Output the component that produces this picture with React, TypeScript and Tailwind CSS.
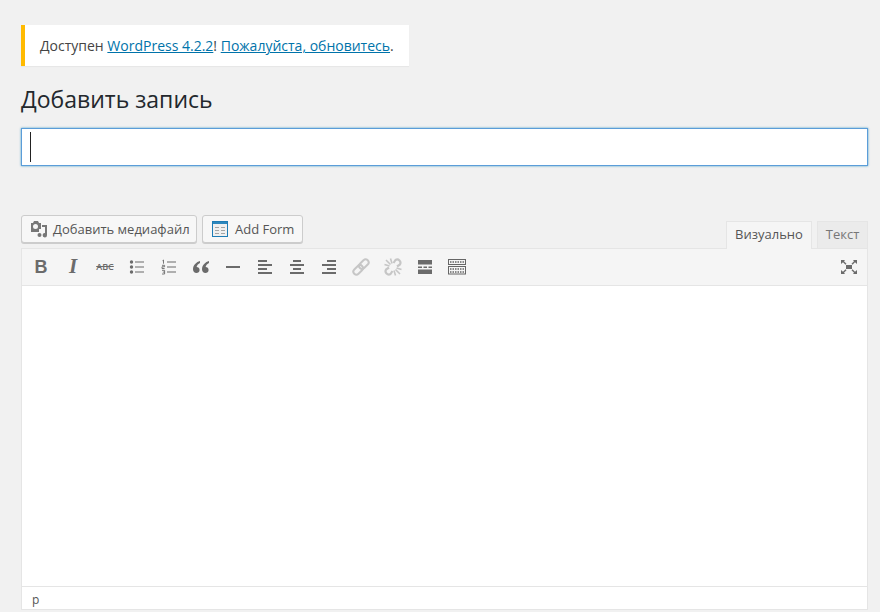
import React from "react";

const grey = "#6b6b6b";

function Bullets() {
  return (
    <svg width="20" height="20" viewBox="0 0 20 20" fill={grey}>
      <circle cx="4.500" cy="5" r="1.700" />
      <circle cx="4.500" cy="10" r="1.700" />
      <circle cx="4.500" cy="15" r="1.700" />
      <rect x="8" y="4.500" width="9" height="1" />
      <rect x="8" y="9.500" width="9" height="1" />
      <rect x="8" y="14.500" width="9" height="1" />
    </svg>
  );
}

function Numbers() {
  return (
    <svg width="20" height="20" viewBox="0 0 20 20" fill={grey}>
      <path
        d="M3.500 3.700 4.500 3v3.700M3 8.300h2.600v1.500H3v1.700h2.600M3 13.300h2.600v3.700H3M3.800 15.100h1.800"
        fill="none"
        stroke={grey}
        strokeWidth="0.900"
      />
      <rect x="8" y="4.500" width="9" height="1" />
      <rect x="8" y="9.500" width="9" height="1" />
      <rect x="8" y="14.500" width="9" height="1" />
    </svg>
  );
}

function Quote() {
  return (
    <svg width="20" height="20" viewBox="0 0 20 20" fill={grey}>
      <path d="M9 4C5.500 5 2 8 2 12.200c0 2.400 1.500 3.800 3.400 3.800 1.800 0 3.200-1.400 3.200-3.100s-1.300-3-3-3c.4-1.600 1.800-3 3.400-3.800z" />
      <path d="M18 4c-3.500 1-7 4-7 8.200 0 2.400 1.500 3.800 3.400 3.800 1.800 0 3.200-1.400 3.200-3.100s-1.300-3-3-3c.4-1.600 1.800-3 3.400-3.800z" />
    </svg>
  );
}

function AlignLeft() {
  return (
    <svg width="20" height="20" viewBox="0 0 20 20" fill={grey}>
      <path d="M12 5V3H3v2h9zm5 4V7H3v2h14zm-5 4v-2H3v2h9zm5 4v-2H3v2h14z" />
    </svg>
  );
}

function AlignCenter() {
  return (
    <svg width="20" height="20" viewBox="0 0 20 20" fill={grey}>
      <path d="M14 5V3H6v2h8zm3 4V7H3v2h14zm-3 4v-2H6v2h8zm3 4v-2H3v2h14z" />
    </svg>
  );
}

function AlignRight() {
  return (
    <svg width="20" height="20" viewBox="0 0 20 20" fill={grey}>
      <path d="M17 5V3H8v2h9zm0 4V7H3v2h14zm0 4v-2H8v2h9zm0 4v-2H3v2h14z" />
    </svg>
  );
}

function LinkIcon() {
  return (
    <svg width="20" height="20" viewBox="0 0 20 20" fill="none" stroke="#c6c6c6" strokeWidth="2">
      <g transform="rotate(-45 10 10)">
        <rect x="0.500" y="7" width="11" height="6" rx="3" />
        <rect x="8.500" y="7" width="11" height="6" rx="3" />
      </g>
    </svg>
  );
}

function Unlink() {
  return (
    <svg width="20" height="20" viewBox="0 0 20 20" fill="none" stroke="#c6c6c6" strokeWidth="2.200">
      <path d="M10.500 6 12.500 3a3.300 3.300 0 0 1 4.500 4.500L14 9.500" />
      <path d="M9.500 14 7.500 17a3.300 3.300 0 0 1-4.500-4.500L6 10.500" />
      <path d="M3 3l4.500 4.500M7.500 1.500l1.500 5M1.500 7.500l5 1.500M17 17l-4.500-4.500M12.500 18.500l-1.500-5M18.500 12.500l-5-1.500" strokeWidth="1.600" />
    </svg>
  );
}

function More() {
  return (
    <svg width="20" height="20" viewBox="0 0 20 20" fill={grey}>
      <rect x="3" y="3" width="14" height="4.500" />
      <rect x="3" y="9.500" width="4" height="1.500" />
      <rect x="8.500" y="9.500" width="3.500" height="1.500" />
      <rect x="13.500" y="9.500" width="3.500" height="1.500" />
      <rect x="3" y="12.500" width="14" height="4.500" />
    </svg>
  );
}

function Kitchen() {
  return (
    <svg width="20" height="20" viewBox="0 0 20 20" fill="none" stroke="#666">
      <rect x="1.500" y="2.500" width="17" height="5" />
      <rect x="1.500" y="9.500" width="17" height="7.500" />
      <path d="M3 5h14M3 12h14M3 15h14" strokeDasharray="1.500 1" strokeWidth="1.500" />
    </svg>
  );
}

function Fullscreen() {
  return (
    <svg width="20" height="20" viewBox="0 0 20 20" fill={grey}>
      <rect x="7" y="8" width="6" height="4" />
      <path d="M2 3h4L5 4.300l2.500 2.500-1 1L4 5.300 2 7zM18 3h-4l1 1.300-2.500 2.500 1 1L16 5.300 18 7zM2 17h4l-1-1.300 2.500-2.500-1-1L4 14.700 2 13zM18 17h-4l1-1.300-2.500-2.500 1-1 2.500 2.500 2-1.700z" />
    </svg>
  );
}

function MediaIcon() {
  return (
    <svg width="20" height="20" viewBox="0 0 20 20" fill="#777">
      <path
        d="M2 4h2l1-2h4l1 2h2v6h-2v3H2zm4.500 1a2.500 2.500 0 1 0 0 5 2.500 2.500 0 0 0 0-5z"
        fillRule="evenodd"
      />
      <path d="M13 6h5v10.200a2.200 2.200 0 1 1-2-2.200V8h-3z" />
      <circle cx="10.500" cy="16" r="2" />
    </svg>
  );
}

function FormIcon() {
  return (
    <svg width="16" height="16" viewBox="0 0 16 16">
      <rect x="0.500" y="0.500" width="15" height="15" fill="#f0f0f0" stroke="#1e7cb5" />
      <rect x="1" y="1" width="14" height="2" fill="#2d87bd" />
      <path d="M3 6.500h4M3 9.500h4M3 12.500h4M9 6.500h4M9 9.500h4M9 12.500h4" stroke="#a5a5a5" />
    </svg>
  );
}

const Tool = ({ children }: { children: React.ReactNode }) => (
  <div className="flex h-7 w-8 items-center justify-center">{children}</div>
);

export default function App() {
  return (
    <div className="h-[612px] overflow-hidden bg-[#f1f1f1] pl-[21px] pr-3 pt-[25px] font-['Open_Sans',sans-serif] text-[#444]">
      {/* Update notice */}
      <div className="w-fit border-l-4 border-[#ffba00] bg-white py-[11px] pl-[15px] pr-[15px] text-[14px] leading-[19px] shadow-[0_1px_1px_rgba(0,0,0,0.04)]">
        Доступен{" "}
        <a href="#" className="text-[#0073aa] underline">
          WordPress 4.2.2
        </a>
        !{" "}
        <a href="#" className="text-[#0073aa] underline">
          Пожалуйста, обновитесь
        </a>
        .
      </div>

      <h1 className="mt-[18px] text-[23px] leading-[31px] text-[#23282d]">Добавить запись</h1>

      {/* Title */}
      <div className="mt-[13px] flex h-[38px] items-center border border-[#5b9dd9] bg-white pl-2 shadow-[0_0_2px_rgba(30,140,190,0.8)]">
        <div className="h-[30px] w-px bg-[#222]" />
      </div>

      {/* Toolbar row */}
      <div className="mt-[49px] flex items-end justify-between">
        <div className="mb-[5px] flex gap-[5px] text-[13px] text-[#555]">
          <button className="flex h-[28px] w-[176px] items-center gap-[4px] rounded-[3px] border border-[#ccc] bg-[#f7f7f7] pl-[7px] shadow-[0_1px_0_#ccc]">
            <MediaIcon />
            <span className="pt-[2px]">Добавить медиафайл</span>
          </button>
          <button className="flex h-[28px] w-[101px] items-center gap-[7px] rounded-[3px] border border-[#ccc] bg-[#f7f7f7] pl-[9px] shadow-[0_1px_0_#ccc]">
            <FormIcon />
            <span className="pt-[2px]">Add Form</span>
          </button>
        </div>
        <div className="flex gap-[5px] text-[13px] leading-[25px] text-[#555]">
          <div className="relative -mb-px h-[28px] w-[86px] border border-b-0 border-[#e5e5e5] bg-[#f5f5f5] text-center">
            Визуально
          </div>
          <div className="h-[27px] w-[51px] border border-b-0 border-[#e5e5e5] bg-[#ebebeb] text-center text-[#777]">
            Текст
          </div>
        </div>
      </div>

      {/* Editor */}
      <div className="border border-[#e5e5e5] bg-white">
        <div className="flex h-[37px] items-center justify-between border-b border-[#e5e5e5] bg-[#f5f5f5] pl-[3px] pr-[2px]">
          <div className="flex items-center">
            <Tool>
              <span className="font-['Liberation_Sans',sans-serif] text-[18px] font-bold text-[#6b6b6b]">B</span>
            </Tool>
            <Tool>
              <span className="font-['Liberation_Serif',serif] text-[21px] font-bold italic text-[#6b6b6b]">I</span>
            </Tool>
            <Tool>
              <span className="text-[9px] font-semibold text-[#6b6b6b] line-through">ABC</span>
            </Tool>
            <Tool>
              <Bullets />
            </Tool>
            <Tool>
              <Numbers />
            </Tool>
            <Tool>
              <Quote />
            </Tool>
            <Tool>
              <span className="h-[2px] w-[14px] bg-[#6b6b6b]" />
            </Tool>
            <Tool>
              <AlignLeft />
            </Tool>
            <Tool>
              <AlignCenter />
            </Tool>
            <Tool>
              <AlignRight />
            </Tool>
            <Tool>
              <LinkIcon />
            </Tool>
            <Tool>
              <Unlink />
            </Tool>
            <Tool>
              <More />
            </Tool>
            <Tool>
              <Kitchen />
            </Tool>
          </div>
          <Tool>
            <Fullscreen />
          </Tool>
        </div>
        <div className="h-[300px] bg-white" />
        <div className="h-[23px] border-t border-[#e5e5e5] pl-[10px] text-[12px] leading-[25px] text-[#555]">p</div>
      </div>
    </div>
  );
}
